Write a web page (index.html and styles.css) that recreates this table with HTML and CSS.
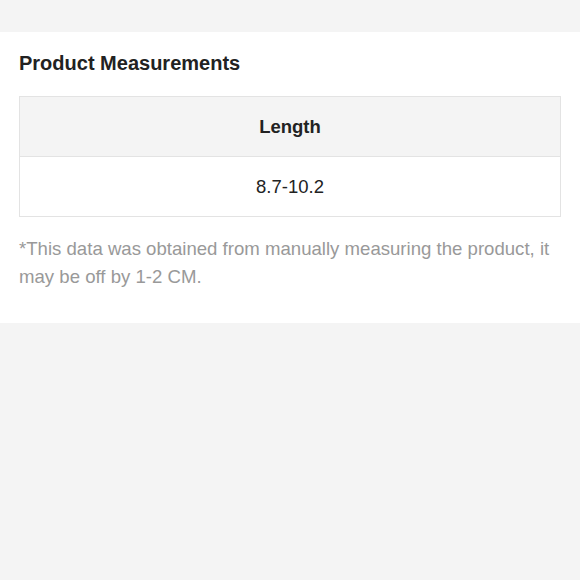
FILE: index.html
```html
<!DOCTYPE html>
<html>
<head>
<meta charset="utf-8">
<link rel="stylesheet" href="styles.css">
</head>
<body>
<section class="card">
  <h2 class="title">Product Measurements</h2>
  <table class="measure">
    <thead><tr><th>Length</th></tr></thead>
    <tbody><tr><td>8.7-10.2</td></tr></tbody>
  </table>
  <p class="note">*This data was obtained from manually measuring the product, it may be off by 1-2 CM.</p>
</section>
</body>
</html>
```
FILE: styles.css
```css
html, body { margin: 0; padding: 0; }
body {
  background: #f4f4f4;
  font-family: "Liberation Sans", Arial, sans-serif;
  height: 580px;
}
.card {
  margin-top: 32px;
  background: #fff;
  padding: 20px 19px 32px;
}
.title {
  margin: 0;
  font-size: 20px;
  line-height: 22px;
  font-weight: bold;
  color: #222;
}
.measure {
  margin-top: 22px;
  width: 100%;
  border-collapse: collapse;
  border: 1px solid #e3e3e3;
}
.measure th, .measure td {
  border: 1px solid #e3e3e3;
  text-align: center;
  height: 59px;
  padding: 0;
  font-size: 18.5px;
  color: #222;
}
.measure th { background: #f4f4f4; font-weight: bold; }
.measure td { background: #fff; font-weight: normal; }
.note {
  margin: 18px 0 0;
  font-size: 18.6px;
  line-height: 28px;
  color: #999;
}
```
